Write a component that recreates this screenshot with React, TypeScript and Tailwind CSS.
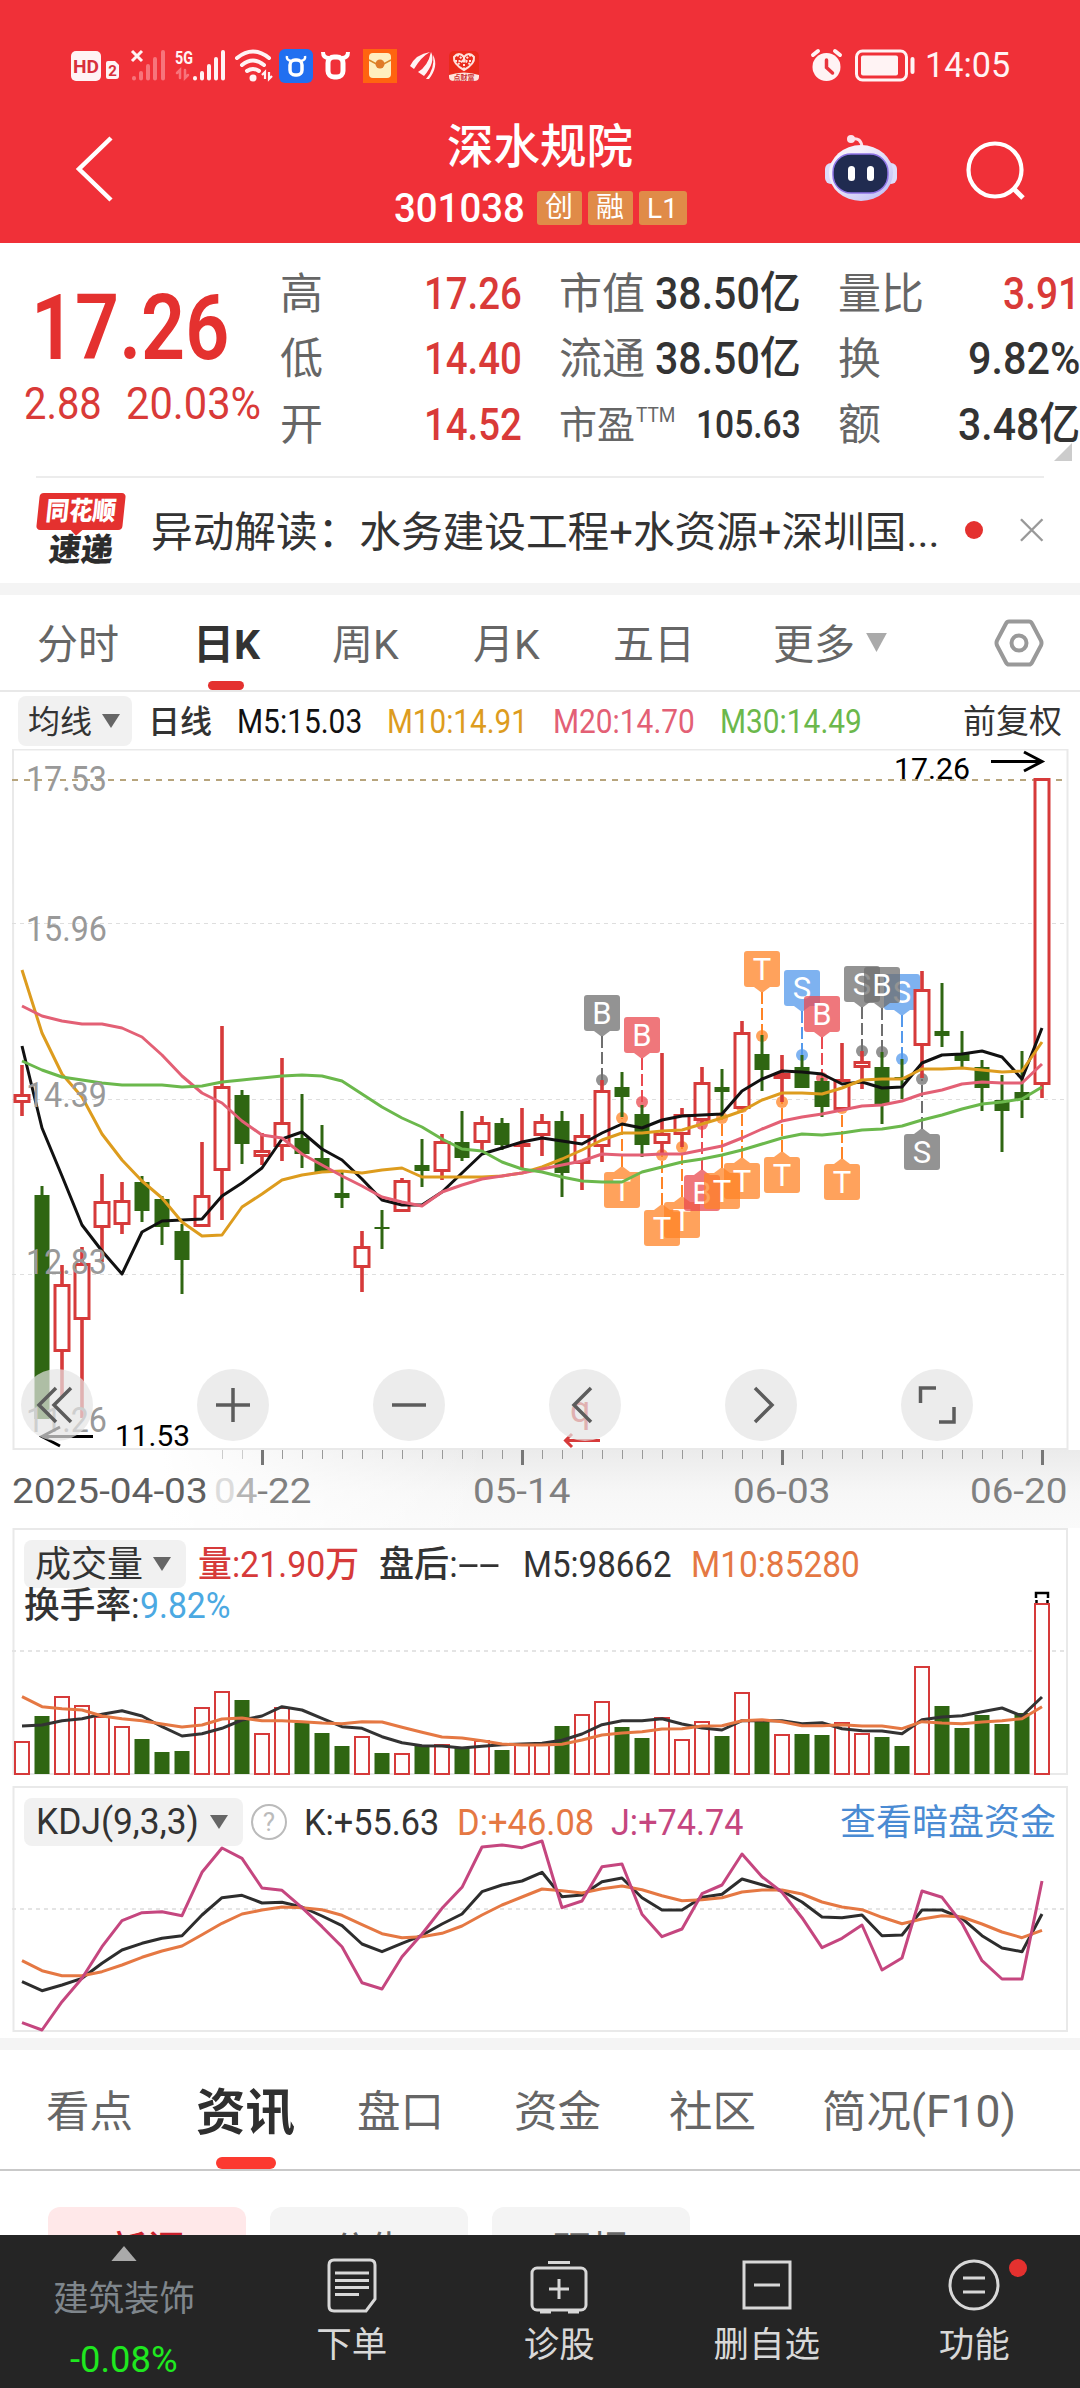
import { useLayoutEffect, useRef, useState, type ReactNode } from "react";
import clsx from "clsx";

// Squeezes a single line of text into the width of its box
function Fit({ className, children }: { className?: string; children: ReactNode }) {
  const box = useRef<HTMLSpanElement>(null);
  const text = useRef<HTMLSpanElement>(null);
  const [scale, setScale] = useState(1);

  useLayoutEffect(() => {
    if (box.current && text.current) {
      setScale(box.current.clientWidth / text.current.offsetWidth);
    }
  }, []);

  return (
    <span ref={box} className={clsx("block shrink-0 whitespace-nowrap", className)}>
      <span ref={text} className="inline-block origin-left" style={{ transform: `scaleX(${scale})` }}>
        {children}
      </span>
    </span>
  );
}

function Caret({ className }: { className?: string }) {
  return (
    <svg viewBox="0 0 20 14" preserveAspectRatio="none" className={clsx("shrink-0", className)}>
      <path d="M1 0h18l-9 14z" fill="currentColor" />
    </svg>
  );
}

const RED = "#d63a3a";
const GREEN = "#2f6612";

// [up, high, top, bottom, low]
const candles: [number, number, number, number, number][] = [
  [1, 1065, 1094, 1103, 1116],
  [0, 1186, 1195, 1419, 1419],
  [1, 1265, 1284, 1352, 1398],
  [1, 1247, 1263, 1320, 1418],
  [1, 1174, 1201, 1228, 1262],
  [1, 1182, 1200, 1225, 1234],
  [0, 1176, 1182, 1211, 1222],
  [0, 1196, 1199, 1227, 1245],
  [0, 1224, 1231, 1260, 1294],
  [1, 1142, 1195, 1227, 1227],
  [1, 1026, 1086, 1171, 1220],
  [0, 1090, 1095, 1144, 1164],
  [1, 1133, 1150, 1157, 1165],
  [1, 1058, 1122, 1147, 1161],
  [0, 1094, 1138, 1154, 1168],
  [0, 1125, 1158, 1172, 1172],
  [0, 1171, 1193, 1198, 1208],
  [1, 1231, 1246, 1268, 1292],
  [0, 1210, 1227, 1229, 1249],
  [1, 1178, 1180, 1212, 1212],
  [0, 1139, 1165, 1171, 1187],
  [1, 1134, 1141, 1172, 1180],
  [0, 1111, 1142, 1158, 1161],
  [1, 1116, 1122, 1143, 1152],
  [0, 1118, 1123, 1145, 1150],
  [1, 1108, 1143, 1147, 1168],
  [1, 1114, 1121, 1136, 1156],
  [0, 1111, 1121, 1173, 1197],
  [1, 1114, 1135, 1164, 1190],
  [1, 1080, 1090, 1147, 1162],
  [0, 1072, 1087, 1097, 1117],
  [0, 1105, 1114, 1145, 1157],
  [1, 1053, 1133, 1144, 1153],
  [1, 1108, 1114, 1135, 1147],
  [1, 1067, 1082, 1121, 1124],
  [0, 1069, 1087, 1092, 1117],
  [1, 1021, 1032, 1109, 1109],
  [0, 1035, 1054, 1070, 1091],
  [1, 1055, 1073, 1079, 1102],
  [0, 1055, 1067, 1088, 1088],
  [0, 1078, 1081, 1107, 1117],
  [1, 1043, 1079, 1110, 1110],
  [1, 1051, 1061, 1068, 1089],
  [0, 1052, 1067, 1104, 1124],
  [0, 1059, 1077, 1080, 1099],
  [1, 971, 989, 1046, 1078],
  [0, 983, 1031, 1036, 1047],
  [0, 1031, 1053, 1061, 1067],
  [0, 1060, 1067, 1088, 1111],
  [0, 1075, 1100, 1111, 1152],
  [0, 1051, 1092, 1100, 1118],
  [1, 778, 778, 1085, 1098],
];

const ma5 = [1046, 1128, 1176, 1225, 1251, 1274, 1232, 1221, 1220, 1219, 1196, 1183, 1168, 1139, 1132, 1149, 1160, 1179, 1200, 1205, 1205, 1192, 1173, 1154, 1148, 1142, 1138, 1141, 1144, 1133, 1124, 1128, 1120, 1116, 1115, 1114, 1091, 1079, 1071, 1072, 1074, 1084, 1082, 1088, 1087, 1063, 1055, 1054, 1051, 1057, 1079, 1028];
const ma10 = [970, 1033, 1074, 1097, 1134, 1160, 1181, 1198, 1222, 1236, 1235, 1207, 1194, 1180, 1175, 1172, 1171, 1173, 1170, 1168, 1177, 1177, 1177, 1177, 1176, 1173, 1167, 1159, 1150, 1140, 1133, 1133, 1131, 1130, 1124, 1118, 1111, 1100, 1093, 1093, 1094, 1088, 1080, 1079, 1079, 1069, 1069, 1068, 1070, 1072, 1071, 1042];
const ma20 = [1006, 1016, 1021, 1024, 1024, 1028, 1037, 1055, 1076, 1093, 1103, 1121, 1135, 1138, 1154, 1165, 1176, 1186, 1197, 1202, 1206, 1192, 1185, 1179, 1176, 1173, 1169, 1165, 1161, 1154, 1155, 1155, 1154, 1154, 1150, 1146, 1138, 1129, 1121, 1117, 1114, 1110, 1106, 1105, 1101, 1094, 1090, 1084, 1082, 1083, 1083, 1064];
const ma30 = [1061, 1070, 1077, 1080, 1083, 1085, 1085, 1085, 1087, 1086, 1082, 1080, 1078, 1076, 1075, 1076, 1081, 1094, 1107, 1118, 1127, 1139, 1149, 1151, 1162, 1169, 1172, 1177, 1181, 1182, 1182, 1172, 1167, 1162, 1159, 1155, 1150, 1144, 1138, 1134, 1135, 1133, 1130, 1129, 1126, 1120, 1115, 1109, 1104, 1102, 1099, 1087];

const volumes = [1741, 1716, 1696, 1705, 1716, 1726, 1739, 1752, 1751, 1707, 1691, 1700, 1733, 1707, 1723, 1733, 1746, 1736, 1753, 1753, 1746, 1744, 1748, 1740, 1750, 1743, 1742, 1726, 1714, 1701, 1727, 1738, 1717, 1739, 1721, 1736, 1692, 1721, 1734, 1734, 1735, 1722, 1733, 1737, 1746, 1666, 1706, 1728, 1715, 1724, 1713, 1603];
const vol5 = [648, 645, 632, 626, 613, 602, 618, 650, 678, 671, 655, 630, 618, 590, 600, 625, 650, 655, 680, 698, 707, 708, 714, 709, 704, 702, 700, 691, 672, 644, 632, 632, 626, 642, 654, 660, 632, 632, 632, 641, 638, 656, 662, 663, 671, 629, 621, 617, 605, 594, 618, 561];
const vol10 = [560, 590, 596, 600, 618, 626, 632, 642, 651, 645, 627, 624, 632, 632, 635, 639, 641, 635, 636, 652, 667, 681, 684, 692, 702, 705, 705, 703, 690, 675, 669, 665, 657, 656, 648, 647, 632, 629, 635, 647, 647, 644, 648, 648, 656, 635, 639, 641, 636, 632, 626, 590];

const kLine = [605, 632, 615, 595, 550, 510, 490, 475, 467, 405, 353, 346, 369, 367, 381, 408, 437, 492, 515, 490, 466, 432, 402, 335, 315, 303, 277, 350, 345, 305, 294, 353, 390, 390, 352, 343, 297, 314, 333, 366, 411, 413, 405, 467, 465, 390, 390, 415, 467, 504, 515, 402];
const dLine = [542, 572, 587, 587, 575, 555, 532, 513, 498, 464, 430, 402, 390, 381, 383, 389, 406, 434, 461, 473, 470, 460, 438, 405, 375, 351, 327, 332, 339, 326, 318, 329, 347, 362, 359, 353, 336, 330, 330, 342, 366, 381, 389, 412, 431, 417, 407, 411, 432, 456, 473, 451];
const jLine = [728, 750, 665, 595, 500, 422, 398, 395, 407, 277, 204, 235, 324, 331, 383, 440, 500, 608, 627, 530, 462, 385, 322, 201, 195, 203, 183, 383, 363, 260, 252, 403, 470, 447, 341, 315, 222, 290, 337, 413, 503, 475, 435, 570, 534, 333, 352, 430, 542, 597, 597, 303];

const ORANGE = "#ff8426";
const PINK = "#ea4a50";
const BLUE = "#5499ec";
const GRAY = "#6f6f6f";

// [index, letter, colour, box top, dot y]
const marks: [number, string, string, number, number][] = [
  [29, "B", GRAY, 995, 1080],
  [31, "B", PINK, 1017, 1102],
  [37, "T", ORANGE, 951, 1036],
  [39, "S", BLUE, 970, 1055],
  [40, "B", PINK, 996, 1078],
  [42, "S", GRAY, 966, 1051],
  [44, "S", BLUE, 974, 1059],
  [43, "B", GRAY, 967, 1052],
  [30, "T", ORANGE, 1172, 1118],
  [33, "T", ORANGE, 1202, 1147],
  [32, "T", ORANGE, 1210, 1155],
  [34, "B", PINK, 1175, 1124],
  [36, "T", ORANGE, 1163, 1107],
  [35, "T", ORANGE, 1173, 1118],
  [38, "T", ORANGE, 1157, 1102],
  [41, "T", ORANGE, 1164, 1108],
  [45, "S", GRAY, 1134, 1079],
];

const px = (i: number) => 22 + i * 20;
const points = (values: number[], scale = 1, offset = 0) =>
  values.map((v, i) => `${px(i)},${(v / scale + offset).toFixed(1)}`).join(" ");

function Mark({ i, letter, color, top, dot }: { i: number; letter: string; color: string; top: number; dot: number }) {
  const x = px(i);
  const below = top > dot;
  const edge = below ? top - 5 : top + 41;
  return (
    <g>
      <line x1={x} x2={x} y1={edge} y2={dot} stroke={color} strokeWidth="2" strokeDasharray="12 4" />
      <circle cx={x} cy={dot} r="6" fill={color} opacity="0.75" />
      <g fill={color} opacity="0.75">
        <rect x={x - 18} y={top} width="36" height="36" rx="3" />
        <path d={below ? `M${x - 8} ${top}l8 -6l8 6z` : `M${x - 8} ${top + 36}l8 6l8 -6z`} />
      </g>
      <text x={x} y={top + 29} fill="#fff" fontSize="31" textAnchor="middle">
        {letter}
      </text>
    </g>
  );
}

function CandleChart() {
  return (
    <svg viewBox="0 749 1080 701" className="block w-full h-[701px]">
      <path d="M13 749.5H1067.5V1449H13.5z" fill="none" stroke="#e9e9e9" strokeWidth="2" />
      <line x1="12" x2="1067" y1="780" y2="780" stroke="#b7a47c" strokeWidth="2" strokeDasharray="6 6" />
      {[923.5, 1099.5, 1274.5].map((y) => (
        <line key={y} x1="12" x2="1067" y1={y} y2={y} stroke="#dedede" strokeWidth="1.2" strokeDasharray="4 4" />
      ))}

      {marks.map(([i, letter, color, top, dot]) => (
        <Mark key={i} i={i} letter={letter} color={color} top={top} dot={dot} />
      ))}

      {candles.map(([up, high, top, bottom, low], i) => {
        const x = px(i);
        return up ? (
          <g key={i} stroke={RED} fill="#fff">
            <path d={`M${x} ${high}V${top}M${x} ${bottom}V${low}`} strokeWidth="3.6" />
            <rect x={x - 7} y={top + 1.5} width="14" height={Math.max(bottom - top - 3, 1)} strokeWidth="3" />
          </g>
        ) : (
          <g key={i} fill={GREEN}>
            <rect x={x - 1.5} y={high} width="3" height={low - high} />
            <rect x={x - 7.5} y={top} width="15" height={bottom - top} />
          </g>
        );
      })}

      <g fill="none" strokeWidth="3" strokeLinejoin="round">
        <polyline points={points(ma5)} stroke="#111" />
        <polyline points={points(ma10)} stroke="#dd9c1e" />
        <polyline points={points(ma20)} stroke="#e36075" />
        <polyline points={points(ma30)} stroke="#6bb84c" />
      </g>

      <g fill="#999" fontSize="35" fontWeight="450">
        {[
          ["17.53", 791],
          ["15.96", 941],
          ["14.39", 1107],
          ["12.83", 1274],
          ["11.26", 1432],
        ].map(([label, y]) => (
          <text key={label} x="26" y={y} textLength="81" lengthAdjust="spacingAndGlyphs">
            {label}
          </text>
        ))}
      </g>

      {/* Highest and lowest price pointers */}
      <g fontSize="30" fill="#000">
        <text x="894" y="779" textLength="76" lengthAdjust="spacingAndGlyphs">17.26</text>
        <text x="115" y="1446" textLength="75" lengthAdjust="spacingAndGlyphs">11.53</text>
      </g>
      <g fill="none" stroke="#000" strokeWidth="3">
        <path d="M991 761.5H1041M1024 752l18 9.500l-18 9.500" />
        <path d="M93 1436.500H43M60 1427l-18 9.500l18 9.500" />
      </g>
      <text x="570" y="1422" fontSize="36" fill={RED}>q</text>
      <path d="M600 1440.500H566M572 1434l-6.500 6.500l6.500 6.500" fill="none" stroke={RED} strokeWidth="3" />
    </svg>
  );
}

const controls = [
  "M35 19L18 36l17 17M50 19L33 36l17 17",
  "M36 19v34M19 36h34",
  "M19 36h34",
  "M42 19L25 36l17 17",
  "M30 19l17 17l-17 17",
  "M35 19H19.500V34M53 38V53H38",
];

const axisDates = ["05-14", "06-03"];

const stats = [
  { label: "高", value: "17.26", cap: "市值", amount: "38.50亿", name: "量比", last: "3.91", lastRed: true, w: "w-[77px]" },
  { label: "低", value: "14.40", cap: "流通", amount: "38.50亿", name: "换", last: "9.82%", w: "w-[112px]" },
  { label: "开", value: "14.52", cap: "市盈", amount: "105.63", name: "额", last: "3.48亿", w: "w-[122px]" },
];

function StatusBar() {
  return (
    <div className="h-[100px] pt-[48px] pl-[71px] flex items-start text-[#fff3f4]">
      <svg viewBox="0 0 410 36" className="w-[410px] h-[36px] shrink-0">
        <rect x="0" y="3" width="30" height="30" rx="5" fill="currentColor" />
        <text x="15" y="25" fontSize="19" fontWeight="700" textAnchor="middle" fill="#d8303b" textLength="26" lengthAdjust="spacingAndGlyphs">HD</text>
        <path d="M35 15q0 -2 2 -2h7l4 4v11q0 3 -3 3h-8q-2 0 -2 -2z" fill="currentColor" />
        <text x="41.500" y="28" fontSize="15" fontWeight="700" textAnchor="middle" fill="#d8303b">2</text>
        <path d="M61 3l10 10M71 3l-10 10" stroke="currentColor" strokeWidth="3" />
        <g stroke="#f7747b" strokeWidth="4" strokeLinecap="round">
          <path d="M63 30v.5M70 25v5.500M77 18v12.500M84 11v19.500M92 4v26.500" />
          <path d="M109 30v-8l-3 3M114 22v8l3 -3" strokeWidth="2.500" fill="none" />
        </g>
        <text x="104" y="16" fontSize="18" fontWeight="700" fill="currentColor" textLength="18" lengthAdjust="spacingAndGlyphs">5G</text>
        <path d="M124 30v.5M131 25v5.500M138 18v12.500M145 11v19.500M152 4v26.500" stroke="currentColor" strokeWidth="4" strokeLinecap="round" />
        <g fill="none" stroke="currentColor" strokeWidth="4" strokeLinecap="round">
          <path d="M166 10q16 -13 32 0M171 17q11 -9 22 0M176 23q6 -4 12 0" />
        </g>
        <circle cx="182" cy="30" r="3.500" fill="currentColor" />
        <path d="M194 31v-7l-3 3M198 24v7l3 -3" fill="none" stroke="currentColor" strokeWidth="2.200" />
        <rect x="208" y="1" width="34" height="34" rx="6" fill="#216ff0" />
        <g fill="none" stroke="#fff">
          <rect x="219" y="12" width="12" height="15" rx="5" strokeWidth="3.500" />
          <path d="M220 13q-5 -1 -4 -5M230 13q5 -1 4 -5" strokeWidth="2.500" />
          <rect x="257" y="9" width="15" height="20" rx="6" strokeWidth="5" />
          <path d="M258 10q-6 0 -6 -6M271 10q6 0 6 -6" strokeWidth="4" />
        </g>
        <rect x="292" y="1" width="34" height="34" fill="#ff6410" />
        <rect x="298" y="5" width="22" height="25" rx="4" fill="#ffeec0" />
        <path d="M298 12l11 6l11 -6" fill="none" stroke="#d9872a" strokeWidth="1.500" />
        <circle cx="309" cy="16" r="4.500" fill="#e07a28" />
        <path d="M339 18q6 -12 20 -14q-9 5 -16 17zM347 24q10 -6 13 -20q5 10 -7 24zM355 31q9 -10 7 -24q6 11 -4 24z" fill="currentColor" />
        <rect x="378" y="3" width="30" height="30" rx="5" fill="#ea2a1c" />
        <g fill="none" stroke="#ffe2dc" strokeWidth="2">
          <path d="M393 22q-11 -6 -10 -13q5 -6 10 0q5 -6 10 0q1 7 -10 13z" />
          <path d="M386 7l14 10M400 7l-14 10M393 9v13M384 13h18" strokeDasharray="2 1.500" />
        </g>
        <path d="M378 27q15 -5 30 0v2q0 4 -5 4h-20q-5 0 -5 -4z" fill="#ffe4dd" />
        <text x="393" y="32" fontSize="7" fontWeight="700" textAnchor="middle" fill="#c33">点财富</text>
      </svg>
      <svg viewBox="0 0 108 36" className="ml-[328px] w-[108px] h-[36px] shrink-0">
        <circle cx="17.500" cy="19" r="14" fill="currentColor" />
        <path d="M17.500 12v7.500l6 5.500" fill="none" stroke="#e8343d" strokeWidth="3.500" strokeLinecap="round" />
        <path d="M4 7l5 -4M31 7l-5 -4" stroke="currentColor" strokeWidth="4" strokeLinecap="round" />
        <rect x="47.500" y="3" width="50" height="29" rx="6" fill="none" stroke="currentColor" strokeWidth="3" />
        <rect x="52" y="7.500" width="37" height="20" rx="2" fill="currentColor" />
        <rect x="101.500" y="9" width="4" height="17" rx="2" fill="currentColor" />
      </svg>
      <Fit className="ml-[8px] w-[85px] text-[35px] leading-[36px] font-[450]">14:05</Fit>
    </div>
  );
}

function TitleBar() {
  return (
    <div className="h-[143px] flex items-start">
      <svg viewBox="0 0 40 70" className="ml-[74px] mt-[34px] w-[40px] h-[70px] shrink-0">
        <path d="M37 4L5 35l32 31" fill="none" stroke="#fff" strokeWidth="4.500" />
      </svg>
      <div className="ml-[276px] mt-[17px] w-[300px] flex flex-col items-center text-white">
        <h1 className="text-[46.500px] leading-[60px] font-medium">深水规院</h1>
        <div className="mt-[12px] flex items-center">
          <Fit className="w-[131px] text-[41px] leading-[38px] font-medium">301038</Fit>
          <span className="ml-[12px] w-[45px] h-[34px] rounded-[3px] bg-[#e08b48] text-[28px] leading-[34px] text-center">创</span>
          <span className="ml-[6px] w-[45px] h-[34px] rounded-[3px] bg-[#e08b48] text-[28px] leading-[34px] text-center">融</span>
          <span className="ml-[6px] w-[48px] h-[34px] rounded-[3px] bg-[#e08b48] text-[28px] leading-[35px] text-center">L1</span>
        </div>
      </div>
      <svg viewBox="0 0 74 70" className="ml-[134px] mt-[34px] w-[74px] h-[70px] shrink-0">
        <defs>
          <linearGradient id="shell" x1="0" y1="0" x2="1" y2="1">
            <stop offset="0.3" stopColor="#f5f0fb" />
            <stop offset="1" stopColor="#b9b9f4" />
          </linearGradient>
        </defs>
        <path d="M28 5q9 -2 10 8" fill="none" stroke="#ffdfe8" strokeWidth="3" />
        <circle cx="27" cy="5" r="4" fill="#fbe3ec" />
        <rect x="1" y="29" width="12" height="21" rx="6" fill="#dedcfa" />
        <rect x="61" y="29" width="12" height="21" rx="6" fill="#dedcfa" />
        <ellipse cx="37" cy="39" rx="32" ry="28" fill="url(#shell)" />
        <rect x="9" y="20" width="55" height="39" rx="18" fill="#202b50" stroke="#8f74e6" strokeWidth="1.500" />
        <rect x="24" y="32" width="7" height="15" rx="3.500" fill="#fff" />
        <rect x="43" y="32" width="7" height="15" rx="3.500" fill="#fff" />
      </svg>
      <svg viewBox="0 0 62 62" className="ml-[67px] mt-[39px] w-[62px] h-[62px] shrink-0">
        <circle cx="30" cy="31" r="26.500" fill="none" stroke="#fff" strokeWidth="4.200" />
        <path d="M48 49L58 59" stroke="#fff" strokeWidth="5" />
      </svg>
    </div>
  );
}

function Quote() {
  return (
    <section className="relative h-[233px] flex">
      <div className="w-[280px] shrink-0 text-[#e4312f]">
        <Fit className="ml-[31px] mt-[33px] w-[198px] h-[105px] text-[90px] leading-[105px] font-semibold">17.26</Fit>
        <div className="mt-[-4px] flex text-[45px] leading-[54px] font-[450] text-[#d93a38]">
          <Fit className="ml-[24px] w-[78px]">2.88</Fit>
          <Fit className="ml-[24px] w-[135px]">20.03%</Fit>
        </div>
      </div>
      <div className="pt-[18px]">
        {stats.map((s) => (
          <div key={s.label} className="h-[65.500px] w-[800px] flex items-center text-[43px] text-[#666] leading-[60px]">
            <span className="w-[144px]">{s.label}</span>
            <Fit className="w-[98px] text-[45px] font-medium text-[#d93a38]">{s.value}</Fit>
            {s.amount === "105.63" ? (
              <>
                <span className="ml-[37px] w-[77px] text-[38px]">{s.cap}</span>
                <Fit className="w-[39px] mt-[-20px] text-[20px]">TTM</Fit>
                <Fit className="ml-[21px] w-[105px] text-[39px] font-medium text-[#333]">{s.amount}</Fit>
              </>
            ) : (
              <>
                <span className="ml-[37px] w-[96px]">{s.cap}</span>
                <Fit className="w-[146px] text-[45px] font-medium text-[#333]">{s.amount}</Fit>
              </>
            )}
            <span className="ml-[37px]">{s.name}</span>
            <Fit className={clsx("ml-auto text-[45px] font-medium", s.w, s.lastRed ? "text-[#d93a38]" : "text-[#333]")}>
              {s.last}
            </Fit>
          </div>
        ))}
      </div>
      <svg viewBox="0 0 18 18" className="absolute right-[8px] bottom-[15px] w-[18px] h-[18px]">
        <path d="M18 0V18H0z" fill="#ccc" />
      </svg>
    </section>
  );
}

function News() {
  return (
    <section className="h-[107px] mx-[36px] border-t-2 border-[#ececec] flex items-start">
      <div className="w-[90px] mt-[15px] shrink-0 flex flex-col items-center font-black">
        <div className="relative w-[86px] h-[37px] -skew-x-6 rounded-[4px] bg-[#e4312f] text-white">
          <Fit className="ml-[8px] w-[70px] text-[26px] leading-[37px]">同花顺</Fit>
          <span className="absolute left-[36px] bottom-[-4px] w-[9px] h-[9px] rotate-45 bg-[#e4312f]" />
        </div>
        <div className="mt-[4px] -skew-x-6 text-[32px] leading-[33px] text-[#2c2c2c]">速递</div>
      </div>
      <Fit className="ml-[25px] mt-[25px] w-[788px] text-[42.200px] leading-[60px] text-[#333]">
        异动解读：水务建设工程+水资源+深圳国...
      </Fit>
      <span className="ml-[26px] mt-[43px] w-[18px] h-[18px] rounded-full bg-[#e4312f]" />
      <svg viewBox="0 0 26 26" className="ml-[36px] mt-[39px] w-[26px] h-[26px]">
        <path d="M2 2l22 22M24 2L2 24" stroke="#999" strokeWidth="2.500" />
      </svg>
    </section>
  );
}

function PeriodTabs() {
  return (
    <nav className="h-[97px] border-b-2 border-[#e8e8e8] flex text-[41px] leading-[100px] text-[#666]">
      <span className="ml-[37px] w-[156px]">分时</span>
      <span className="relative w-[139px] font-bold text-[#333]">
        日K
        <i className="absolute left-[15px] top-[86px] w-[36px] h-[9px] rounded-full bg-[#e4312f]" />
      </span>
      <span className="w-[141px]">周K</span>
      <span className="w-[140px]">月K</span>
      <span className="w-[160px]">五日</span>
      <span className="w-[92px]">更多</span>
      <Caret className="mt-[38px] w-[23px] h-[19px] text-[#aaa]" />
      <svg viewBox="0 0 50 48" className="ml-[106px] mt-[24px] w-[50px] h-[48px]" fill="none" stroke="#999" strokeWidth="4">
        <path d="M15 2.500h20q2 0 3 2l9 17q1 2.500 0 5l-9 17q-1 2 -3 2H15q-2 0 -3 -2l-9 -17q-1 -2.500 0 -5l9 -17q1 -2 3 -2z" />
        <circle cx="25" cy="24" r="7.500" />
      </svg>
    </nav>
  );
}

function MaLegend() {
  return (
    <div className="h-[57px] flex items-center text-[33px] leading-[50px] text-[#333]">
      <button type="button" className="ml-[18px] w-[114px] h-[50px] rounded-[8px] bg-[#f1f1f1] flex items-center pl-[10px] text-[32px]">
        <span className="pt-[2px]">均线</span>
        <Caret className="ml-[9px] w-[20px] h-[14px] text-[#666]" />
      </button>
      <span className="ml-[16px] w-[89px] pt-[2px] text-[32px] font-medium">日线</span>
      <Fit className="w-[125px] pt-[2px] font-[450] text-[#111]">M5:15.03</Fit>
      <Fit className="ml-[25px] w-[141px] pt-[2px] font-[450] text-[#dd9c1e]">M10:14.91</Fit>
      <Fit className="ml-[25px] w-[142px] pt-[2px] font-[450] text-[#e36075]">M20:14.70</Fit>
      <Fit className="ml-[25px] w-[142px] pt-[2px] font-[450] text-[#6bb84c]">M30:14.49</Fit>
      <span className="ml-auto mr-[18px] pt-[2px] text-[33px]">前复权</span>
    </div>
  );
}

function DateAxis() {
  return (
    <div className="relative h-[78px] bg-linear-to-b from-[#ebebeb] via-[#f7f7f7] via-55% to-[#fafafa]">
      <div className="absolute inset-0 bg-linear-to-r from-white from-15% to-transparent to-45%" />
      <svg viewBox="0 0 1080 16" className="absolute top-0 left-0 w-full h-[16px]">
        {Array.from({ length: 42 }, (_, k) => k + 10).map((i) =>
          i % 13 === 12 ? (
            <rect key={i} x={px(i) - 1} y="0" width="3" height="15" fill="#777" />
          ) : (
            <rect key={i} x={px(i)} y="0" width="1" height="9" fill={i < 12 ? "#ccc" : "#999"} />
          ),
        )}
      </svg>
      <div className="relative pt-[21px] flex text-[35px] leading-[41px] font-[450] text-[#808080]">
        <Fit className="ml-[12px] w-[196px] text-[#5f5f5f]">2025-04-03</Fit>
        <Fit className="ml-[6px] w-[97px]">
          <span className="text-[#dcdcdc]">0</span>
          <span className="text-[#b4b4b4]">4</span>
          -22
        </Fit>
        {axisDates.map((d, k) => (
          <Fit key={d} className={clsx("w-[97px]", k ? "ml-[163px]" : "ml-[162px]")}>
            {d}
          </Fit>
        ))}
        <Fit className="ml-auto mr-[13px] w-[97px]">06-20</Fit>
      </div>
    </div>
  );
}

function VolumePanel() {
  return (
    <section className="relative h-[247px]">
      <svg viewBox="0 1528 1080 247" className="absolute inset-0 w-full h-[247px]">
        <path d="M13.500 1529H1067V1774H13.500z" fill="#fff" stroke="#e9e9e9" strokeWidth="2" />
        <line x1="12" x2="1067" y1="1651" y2="1651" stroke="#e4e4e4" strokeWidth="2" strokeDasharray="4 4" />
        {volumes.map((y, i) =>
          candles[i][0] ? (
            <rect key={i} x={px(i) - 7} y={y + 1} width="14" height={1773 - y} fill="#fff" stroke={RED} strokeWidth="2" />
          ) : (
            <rect key={i} x={px(i) - 7.5} y={y} width="15" height={1774 - y} fill={GREEN} />
          ),
        )}
        <path d="M1036 1598V1593H1048V1598M1036.500 1600v3M1047.500 1600v3" fill="none" stroke="#000" strokeWidth="2.500" />
        <g fill="none" strokeWidth="3" strokeLinejoin="round">
          <polyline points={points(vol5, 3, 1510)} stroke="#333" />
          <polyline points={points(vol10, 3, 1510)} stroke="#e57843" />
        </g>
      </svg>
      <div className="relative pt-[12px] pl-[24px] text-[36px] leading-[50px] text-[#333]">
        <div className="h-[48px] flex items-center">
          <button type="button" className="w-[162px] h-[48px] rounded-[8px] bg-[#f1f1f1] flex items-center pl-[11px]">
            <span className="pt-[2px]">成交量</span>
            <Caret className="ml-[9px] w-[20px] h-[14px] text-[#666]" />
          </button>
          <Fit className="ml-[12px] w-[161px] pt-[2px] font-[450] text-[#d63a3a]">量:21.90万</Fit>
          <Fit className="ml-[20px] w-[79px] pt-[2px] font-[450]">盘后:</Fit>
          <Fit className="w-[42px] pt-[2px] font-[450]">--</Fit>
          <Fit className="ml-[23px] w-[149px] pt-[2px] font-[450]">M5:98662</Fit>
          <Fit className="ml-[19px] w-[169px] pt-[2px] font-[450] text-[#e57843]">M10:85280</Fit>
        </div>
        <div className="mt-[-7px] flex">
          <Fit className="w-[116px] font-[450]">换手率:</Fit>
          <Fit className="w-[91px] font-[450] text-[#4ba9e2]">9.82%</Fit>
        </div>
      </div>
    </section>
  );
}

function KdjPanel() {
  return (
    <section className="relative mt-[11px] h-[246px]">
      <svg viewBox="0 1786 1080 246" className="absolute inset-0 w-full h-[246px]">
        <path d="M13.500 1787H1067V2031H13.500z" fill="none" stroke="#e9e9e9" strokeWidth="2" />
        <line x1="12" x2="1067" y1="1909" y2="1909" stroke="#e4e4e4" strokeWidth="2" strokeDasharray="4 4" />
        <g fill="none" strokeWidth="3" strokeLinejoin="round">
          <polyline points={points(kLine, 3, 1780)} stroke="#2d2d2d" />
          <polyline points={points(dLine, 3, 1780)} stroke="#e57843" />
          <polyline points={points(jLine, 3, 1780)} stroke="#c5467f" />
        </g>
      </svg>
      <div className="relative mt-[12px] h-[48px] pl-[24px] flex items-center text-[36px] leading-[50px] font-[450] text-[#333]">
        <button type="button" className="w-[219px] h-[48px] rounded-[8px] bg-[#f1f1f1] flex items-center pl-[12px]">
          <Fit className="w-[163px] font-normal text-left">KDJ(9,3,3)</Fit>
          <Caret className="ml-[10px] w-[20px] h-[14px] text-[#666]" />
        </button>
        <span className="ml-[8px] w-[36px] h-[36px] rounded-full border-[2.500px] border-[#bbb] text-[26px] leading-[32px] font-normal text-center text-[#bbb]">?</span>
        <Fit className="ml-[17px] w-[135px] pt-[2px]">K:+55.63</Fit>
        <Fit className="ml-[18px] w-[137px] pt-[2px] text-[#e57843]">D:+46.08</Fit>
        <Fit className="ml-[17px] w-[132px] pt-[2px] text-[#c5467f]">J:+74.74</Fit>
        <span className="ml-auto mr-[24px] pt-[2px] font-normal text-[#4a8bd3]">查看暗盘资金</span>
      </div>
    </section>
  );
}

function InfoTabs() {
  return (
    <nav className="h-[121px] border-b-2 border-[#c9c9c9] flex text-[43.500px] leading-[126px] text-[#666]">
      <span className="ml-[46px] w-[150px]">看点</span>
      <span className="relative w-[161px] text-[49.500px] font-bold text-[#2f2f2f]">
        资讯
        <i className="absolute left-[20px] top-[107px] w-[60px] h-[12px] rounded-full bg-[#fc3a30]" />
      </span>
      <span className="w-[157px]">盘口</span>
      <span className="w-[155px]">资金</span>
      <span className="w-[153px]">社区</span>
      <Fit className="w-[194px]">简况(F10)</Fit>
    </nav>
  );
}

const actions = [
  {
    label: "下单",
    icon: (
      <>
        <path d="M9 4h36q5 0 5 5v34l-9 12H9q-5 0 -5 -5V9q0 -5 5 -5z" />
        <path d="M10 17h34M10 24.500h34M10 31.500h34M10 38.500h24" />
      </>
    ),
  },
  {
    label: "诊股",
    icon: (
      <>
        <rect x="0" y="12" width="54" height="42" rx="5" />
        <path d="M16 6.500h22M27 23v20M17 33h20M8 56h11M36 56h11" />
      </>
    ),
  },
  {
    label: "删自选",
    icon: (
      <>
        <rect x="4" y="6" width="46" height="46" />
        <path d="M14 29h26" />
      </>
    ),
  },
  {
    label: "功能",
    icon: (
      <>
        <circle cx="27" cy="29" r="24" />
        <path d="M16 22h22M16 36h22" />
      </>
    ),
  },
];

function BottomBar() {
  return (
    <footer className="h-[153px] bg-[#252525] flex">
      <div className="w-[248px] shrink-0 flex flex-col items-center">
        <Caret className="mt-[11px] w-[28px] h-[15px] rotate-180 text-[#aaa]" />
        <span className="mt-[14px] text-[35.500px] leading-[48px] text-[#7f868c]">建筑装饰</span>
        <Fit className="mt-[15px] w-[108px] text-[36px] leading-[44px] text-[#1fe81f]">-0.08%</Fit>
      </div>
      {actions.map((a) => (
        <div key={a.label} className="relative w-[207.500px] shrink-0 flex flex-col items-center text-[#d8d8d8]">
          <svg viewBox="-2 0 58 60" className="mt-[21px] w-[58px] h-[60px]" fill="none" stroke="currentColor" strokeWidth="3">
            {a.icon}
          </svg>
          <span className="mt-[5px] text-[35.500px] leading-[48px]">{a.label}</span>
          {a.label === "功能" && <i className="absolute left-[138px] top-[24px] w-[18px] h-[18px] rounded-full bg-[#e4312f]" />}
        </div>
      ))}
    </footer>
  );
}

export default function App() {
  return (
    <div className="w-[1080px] h-[2388px] overflow-hidden flex flex-col bg-white font-[Roboto,'Noto_Sans_CJK_SC',sans-serif]">
      <header className="h-[243px] shrink-0 bg-[#f03038]">
        <StatusBar />
        <TitleBar />
      </header>
      <Quote />
      <News />
      <div className="h-[12px] bg-[#f4f4f4]" />
      <PeriodTabs />
      <MaLegend />

      {/* K-line chart with floating controls */}
      <div className="relative h-[701px]">
        <CandleChart />
        <div className="absolute left-[21px] top-[620px] flex gap-[104px]">
          {controls.map((d) => (
            <button key={d} type="button" className="w-[72px] h-[72px] rounded-full bg-[#e4e4e4]/70">
              <svg viewBox="0 0 72 72" className="w-[72px] h-[72px]">
                <path d={d} fill="none" stroke="#5c5c5c" strokeWidth="3.500" />
              </svg>
            </button>
          ))}
        </div>
      </div>

      <DateAxis />
      <VolumePanel />
      <KdjPanel />
      <div className="mt-[6px] h-[12px] shrink-0 bg-[#f4f4f4]" />
      <InfoTabs />
      <div className="h-[64px] shrink-0 overflow-hidden pl-[48px] pt-[36px] flex gap-[24px] text-[38px] leading-[86px] text-center text-[#666]">
        <span className="w-[198px] h-[84px] rounded-[12px] bg-[#ffe8e9] font-medium text-[#c8202c]">新闻</span>
        <span className="w-[198px] h-[84px] rounded-[12px] bg-[#f4f4f4]">公告</span>
        <span className="w-[198px] h-[84px] rounded-[12px] bg-[#f4f4f4]">研报</span>
      </div>
      <BottomBar />
    </div>
  );
}
